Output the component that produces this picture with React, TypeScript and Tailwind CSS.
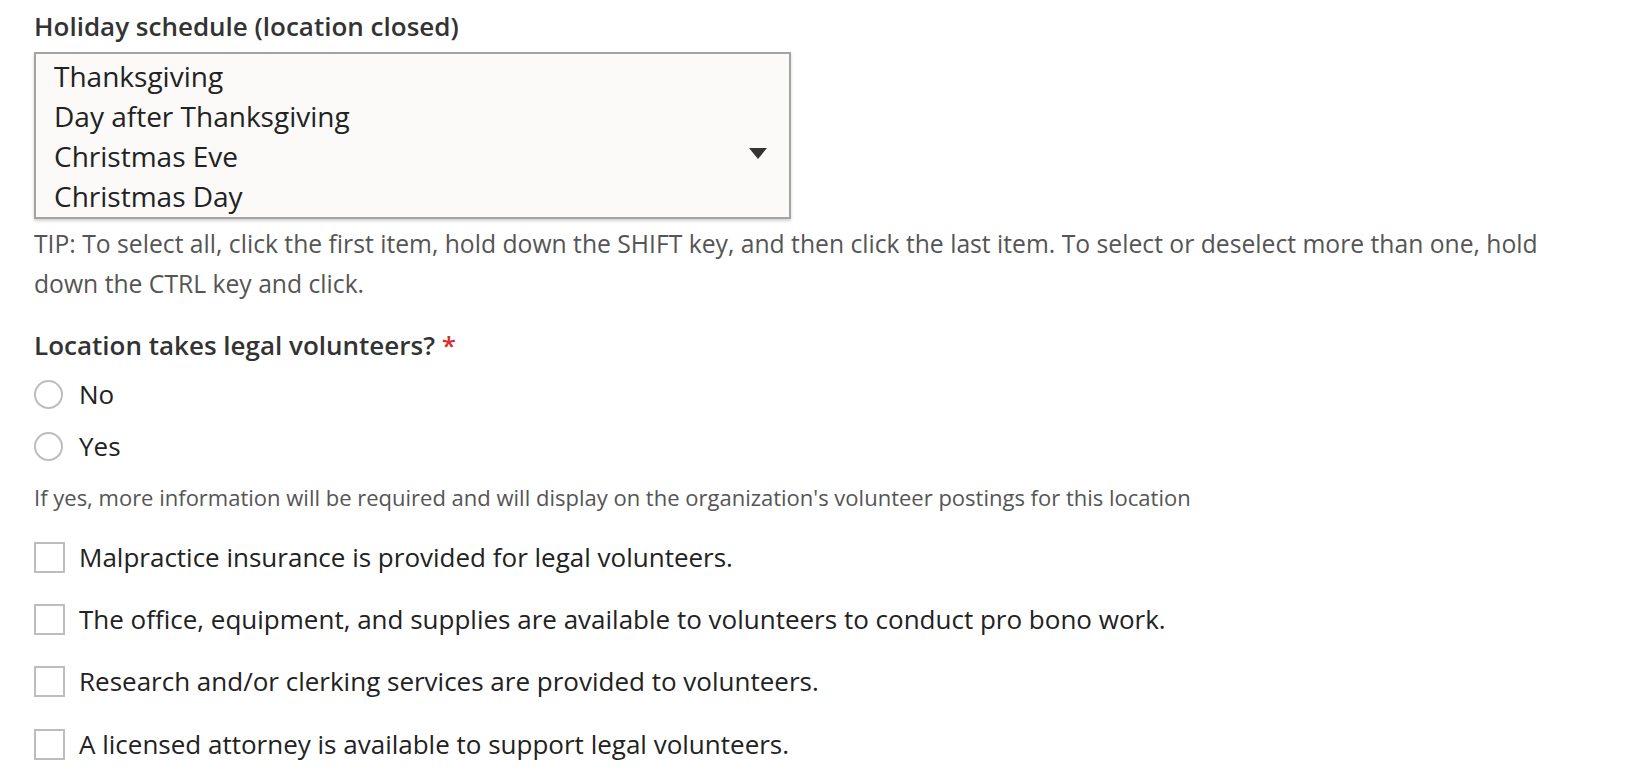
const holidays = ["Thanksgiving", "Day after Thanksgiving", "Christmas Eve", "Christmas Day"];

const supports = [
  "Malpractice insurance is provided for legal volunteers.",
  "The office, equipment, and supplies are available to volunteers to conduct pro bono work.",
  "Research and/or clerking services are provided to volunteers.",
  "A licensed attorney is available to support legal volunteers.",
];

export default function App() {
  return (
    <div className="min-h-screen bg-white px-[34px] pt-[10px] text-[#222] font-['Open_Sans',sans-serif]">
      <label className="block text-[26px] font-semibold leading-[32px] text-[#333]">
        Holiday schedule (location closed)
      </label>

      <div className="mt-[10px] flex h-[167px] w-[757px] border-2 border-[#a3a3a3] bg-[#fbfaf8] shadow-[0_2px_3px_rgba(0,0,0,0.18)]">
        <ul className="flex-1 pl-[18px] pt-[2px] text-[28px] leading-[40px]">
          {holidays.map((h) => (
            <li key={h}>{h}</li>
          ))}
        </ul>
        <svg width="18" height="11" viewBox="0 0 18 11" className="mr-[22px] mt-[94px]">
          <path d="M0 0h18L9 11z" fill="#333" />
        </svg>
      </div>

      <p className="mt-[5px] max-w-[1552px] text-[24.7px] leading-[40px] text-[#555]">
        TIP: To select all, click the first item, hold down the SHIFT key, and then click the last item. To select or
        deselect more than one, hold down the CTRL key and click.
      </p>

      <fieldset className="mt-[25px]">
        <legend className="text-[26px] font-semibold leading-[32px] text-[#333]">
          Location takes legal volunteers? <span className="text-[#d32f2f]">*</span>
        </legend>
        <div className="mt-[7px]">
          {["No", "Yes"].map((opt) => (
            <label key={opt} className="flex h-[52px] items-center gap-[16px] text-[26px]">
              <span className="h-[29px] w-[29px] rounded-full border-2 border-[#bdbdbd] bg-white" />
              {opt}
            </label>
          ))}
        </div>
      </fieldset>

      <p className="mt-[11px] text-[22px] leading-[28px] text-[#555]">
        If yes, more information will be required and will display on the organization's volunteer postings for this
        location
      </p>

      <div className="mt-[15px]">
        {supports.map((s) => (
          <label key={s} className="flex h-[62.4px] items-center gap-[14px] text-[26px]">
            <span className="h-[31px] w-[31px] border-2 border-[#bdbdbd] bg-white" />
            {s}
          </label>
        ))}
      </div>
    </div>
  );
}
